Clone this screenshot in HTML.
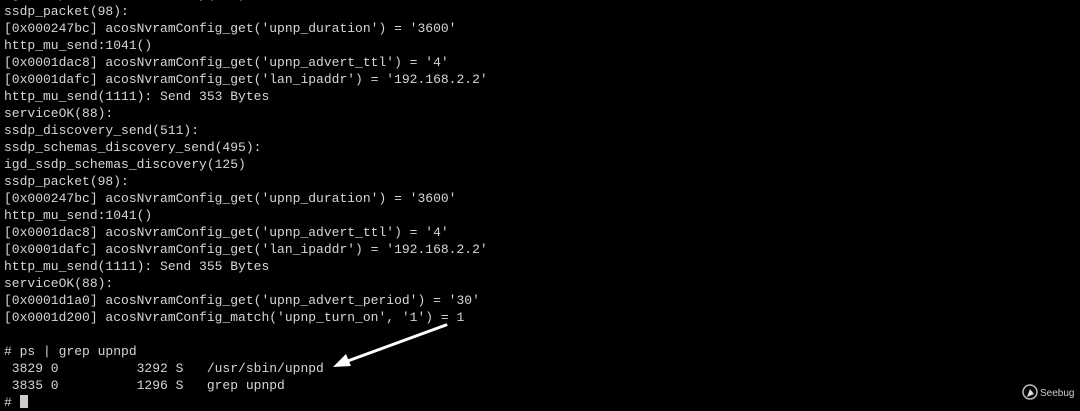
<!DOCTYPE html>
<html><head><style>
html,body{margin:0;padding:0;background:#000;width:1080px;height:403px;overflow:hidden}
pre{position:absolute;left:4px;top:-14px;margin:0;font-family:"Liberation Mono",monospace;font-size:13px;line-height:17px;color:#d6d6d6;white-space:pre}
.cur{display:inline-block;width:8px;height:13px;background:#ccc;vertical-align:-2px}
</style></head><body>
<pre>igd_ssdp_schemas_discovery(125)
ssdp_packet(98):
[0x000247bc] acosNvramConfig_get('upnp_duration') = '3600'
http_mu_send:1041()
[0x0001dac8] acosNvramConfig_get('upnp_advert_ttl') = '4'
[0x0001dafc] acosNvramConfig_get('lan_ipaddr') = '192.168.2.2'
http_mu_send(1111): Send 353 Bytes
serviceOK(88):
ssdp_discovery_send(511):
ssdp_schemas_discovery_send(495):
igd_ssdp_schemas_discovery(125)
ssdp_packet(98):
[0x000247bc] acosNvramConfig_get('upnp_duration') = '3600'
http_mu_send:1041()
[0x0001dac8] acosNvramConfig_get('upnp_advert_ttl') = '4'
[0x0001dafc] acosNvramConfig_get('lan_ipaddr') = '192.168.2.2'
http_mu_send(1111): Send 355 Bytes
serviceOK(88):
[0x0001d1a0] acosNvramConfig_get('upnp_advert_period') = '30'
[0x0001d200] acosNvramConfig_match('upnp_turn_on', '1') = 1

# ps | grep upnpd
 3829 0          3292 S   /usr/sbin/upnpd
 3835 0          1296 S   grep upnpd
# <span class="cur"></span></pre>
<svg width="1080" height="403" style="position:absolute;left:0;top:0">
<line x1="446" y1="325" x2="345" y2="362" stroke="#fff" stroke-width="3" stroke-linecap="round"/>
<polygon points="333,367 346,354 351,366" fill="#fff"/>
<circle cx="1030" cy="392" r="7" fill="none" stroke="#bbb" stroke-width="1.5"/>
<path d="M1027 397 l3 -8 l4 5z" fill="#ddd"/>
<text x="1040" y="396" font-family="Liberation Sans,sans-serif" font-size="10" fill="#ccc">Seebug</text>
</svg>
</body></html>
